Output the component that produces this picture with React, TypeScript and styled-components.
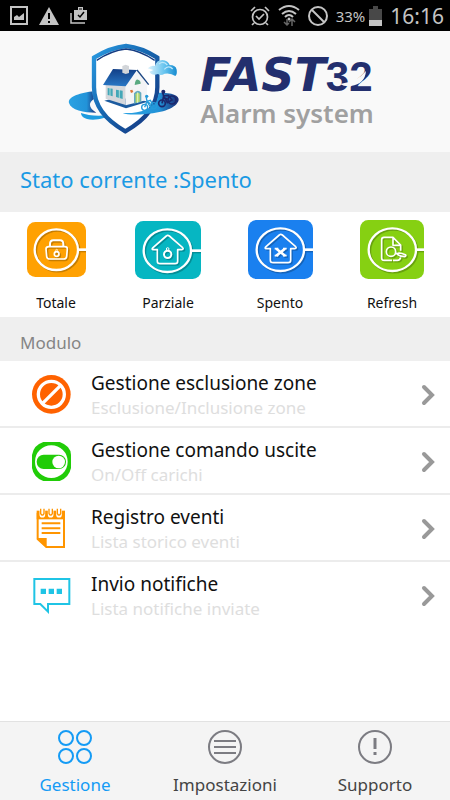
import React from "react";
import styled, { createGlobalStyle } from "styled-components";

const GlobalStyle = createGlobalStyle`
  * { box-sizing: border-box; }
  body { margin: 0; background: #fff; }
  button { font: inherit; color: inherit; background: none; border: 0; padding: 0; cursor: pointer; }
  svg { display: block; flex: none; }
`;

const Page = styled.div`
  min-height: 100vh;
  display: flex;
  flex-direction: column;
  background: #fff;
  color: #111;
  font-family: "Noto Sans", "Open Sans", sans-serif;
`;

const StatusBar = styled.div`
  height: 31px;
  padding: 0 6px 0 10px;
  display: flex;
  align-items: center;
  justify-content: space-between;
  background: #000;
  color: #c4c4c4;
`;

const StatusGroup = styled.div<{ $gap: number }>`
  display: flex;
  align-items: center;
  gap: ${(p) => p.$gap}px;
`;

const BatteryGroup = styled.div`
  display: flex;
  align-items: center;
  gap: 4px;
`;

const Percent = styled.span`
  font-size: 15px;
  line-height: 20px;
`;

const Clock = styled.span`
  font-size: 21px;
  line-height: 28px;
`;

const Header = styled.header`
  height: 121px;
  padding: 11px 8px 0 0;
  display: flex;
  justify-content: center;
  gap: 20px;
  background: #f9f9f9;
`;

const Brand = styled.div`
  padding-top: 9px;
`;

const Wordmark = styled.div`
  display: flex;
  align-items: baseline;
  height: 48px;
  line-height: 48px;
  color: #232f6e;
  font-weight: 700;
`;

const WordmarkName = styled.span`
  font-family: "DejaVu Sans", sans-serif;
  font-style: italic;
  font-size: 46px;
`;

const WordmarkNumber = styled.span`
  position: relative;
  font-family: "Liberation Sans", sans-serif;
  font-size: 42px;
`;

const Swoosh = styled.svg`
  position: absolute;
  left: 14px;
  top: 16px;
`;

const Tagline = styled.div`
  font-size: 26px;
  line-height: 28px;
  font-weight: 600;
  color: #a0a0a0;
`;

const Current = styled.div`
  height: 60px;
  padding: 0 20px 6px;
  display: flex;
  align-items: center;
  background: #efefef;
  color: #1b9ae4;
  font-size: 22px;
`;

const Modes = styled.div`
  height: 105px;
  padding-right: 2px;
  display: grid;
  grid-template-columns: repeat(4, 1fr);
`;

const ModeButton = styled.button`
  display: flex;
  flex-direction: column;
  align-items: center;
  font-size: 14px;
  line-height: 20px;
`;

const ModeIcon = styled.span`
  height: 81px;
  padding-bottom: 6px;
  display: flex;
  align-items: center;
`;

const SectionTitle = styled.h2`
  margin: 0;
  height: 44px;
  padding: 8px 20px 0;
  background: #efefef;
  color: #858585;
  font-size: 17px;
  line-height: 36px;
  font-weight: 400;
`;

const List = styled.ul`
  margin: 0;
  padding: 0;
  list-style: none;
`;

const Item = styled.li`
  & + & { border-top: 2px solid #ececec; }
`;

const RowButton = styled.button`
  width: 100%;
  height: 65px;
  padding: 2px 15px 0 32px;
  display: flex;
  align-items: center;
  text-align: left;
`;

const RowText = styled.span`
  flex: 1;
  padding-left: 20px;
  display: flex;
  flex-direction: column;
`;

const RowTitle = styled.span`
  font-size: 19px;
  line-height: 26px;
`;

const RowDetail = styled.span`
  font-size: 17px;
  line-height: 24px;
  color: #dedede;
`;

const TabBar = styled.nav`
  height: 79px;
  margin-top: auto;
  display: grid;
  grid-template-columns: repeat(3, 1fr);
  background: #f4f4f4;
  border-top: 1px solid #e2e2e2;
`;

const Tab = styled.button<{ $active?: boolean }>`
  && { color: ${(p) => (p.$active ? "#149bf5" : "#444")}; }
  padding-top: 7px;
  display: flex;
  flex-direction: column;
  align-items: center;
  gap: 8px;
  font-size: 17px;
  line-height: 24px;
`;

const Logo = () => (
  <svg width="112" height="93" viewBox="31 22 336 279" role="img" aria-label="Fast 32">
    <defs>
      <linearGradient id="shield" x1="0" y1="0" x2="1" y2="1">
        <stop offset="0" stopColor="#2a9be2" />
        <stop offset=".45" stopColor="#1767b0" />
        <stop offset="1" stopColor="#16327c" />
      </linearGradient>
      <linearGradient id="ring" x1="0" x2="1">
        <stop offset="0" stopColor="#2aa2e3" />
        <stop offset=".65" stopColor="#2293d8" />
        <stop offset="1" stopColor="#1b2b75" />
      </linearGradient>
      <linearGradient id="roof" x1="0" y1="0" x2="0" y2="1">
        <stop offset="0" stopColor="#123f87" />
        <stop offset="1" stopColor="#2877c5" />
      </linearGradient>
      <linearGradient id="cloud" x1="0" x2="1">
        <stop offset="0" stopColor="#dff3fc" />
        <stop offset=".6" stopColor="#62c2ee" />
        <stop offset="1" stopColor="#168bd0" />
      </linearGradient>
    </defs>
    <path d="M110 170C65 174 29 188 34 205C40 226 78 234 116 234C96 222 88 206 110 192Z" fill="url(#ring)" />
    <path d="M70 235C91 243 130 246 164 239C148 251 110 259 88 253C78 250 70 244 70 235Z" fill="#1d9ce0" />
    <path d="M104 67Q155 36 205 32Q254 36 304 67V158C304 222 257 263 203 291C149 263 104 222 104 158Z" fill="#fff" />
    <path d="M109 69Q158 39 205 34Q252 39 299 69V158C299 218 255 261 203 290C151 261 109 218 109 158Z" fill="none" stroke="url(#shield)" strokeWidth="13" />
    <path d="M117 77Q160 48 205 43Q248 48 291 77" fill="none" stroke="#143c82" strokeWidth="4" />
    <path d="M195 235C245 238 282 222 296 202L304 174C344 174 365 182 363 196C358 220 312 235 270 237C236 241 210 241 195 235Z" fill="url(#ring)" />
    <path d="M140 198L205 221L270 201L245 194L170 190Z" fill="#1c5b9f" />
    <path d="M144 146L204 150L204 211L144 192Z" fill="#d5d8dc" />
    <path d="M204 151L239 109L269 148L267 196L204 212Z" fill="#f3f4f6" />
    <path d="M166 103L238 106L204 155L136 151Z" fill="url(#roof)" />
    <path d="M238 106L273 150" stroke="#1c4783" strokeWidth="4" />
    <path d="M194 94L204 90L214 94V115L204 118L194 114Z" fill="#d2d5d9" />
    <path d="M150 160L165 162V185L150 181ZM175 165L195 168V193L175 187Z" fill="#43a7b8" />
    <path d="M157 160V184M185 165V190" stroke="#dff7ec" strokeWidth="2" />
    <path d="M229 207V176Q239 162 251 174V202Z" fill="#66aabd" />
    <path d="M234 204V179Q239 170 246 177V201Z" fill="#b8d96b" />
    <path d="M240 173V205" stroke="#f8fff8" strokeWidth="2" />
    <path d="M231 151Q233 133 241 135Q249 137 249 147Z" fill="#58a980" />
    <path d="M217 167L224 165L227 172L220 175Z" fill="#df773b" />
    <g fill="none" stroke="#249bda" strokeWidth="4">
      <circle cx="261" cy="218" r="9" /><circle cx="288" cy="213" r="9" />
      <path d="M261 218L268 200L277 215L288 213L278 197L268 200M266 188L268 201L278 207" />
    </g>
    <circle cx="267" cy="185" r="5" fill="#249bda" />
    <g fill="none" stroke="#1b286d" strokeWidth="5">
      <circle cx="313" cy="206" r="10" /><circle cx="343" cy="196" r="12" />
      <path d="M313 206L318 184L329 204L343 196L332 182L316 184M315 173L319 189L330 194" />
    </g>
    <circle cx="317" cy="171" r="6" fill="#1b286d" />
    <path d="M270 101Q281 90 292 94Q296 76 314 76Q331 77 336 91Q354 91 357 105Q359 119 353 124Q339 114 321 117Q309 124 301 118Q282 124 275 111L287 106Z" fill="url(#cloud)" />
    <path d="M304 88Q317 77 329 91M320 104Q333 90 345 103" fill="none" stroke="#bde7fa" strokeWidth="4" />
  </svg>
);

const House = () => <path d="M44 75L31 75Q26 74 31 69L71 34Q75 30 80 34L120 69Q124 74 117 75H105V110Q105 117 97 117H52Q44 117 44 110Z" />;

type ModeKind = "total" | "partial" | "off" | "refresh";
const modeLook: Record<ModeKind, { w: number; h: number; color: string }> = {
  total: { w: 59, h: 55, color: "#ffa102" },
  partial: { w: 66, h: 58, color: "#06b6c2" },
  off: { w: 65, h: 59, color: "#1a80ef" },
  refresh: { w: 64, h: 59, color: "#86d012" },
};

const ModeGlyph = ({ kind }: { kind: ModeKind }) => {
  const { w, h, color } = modeLook[kind];
  const W = w * 3;
  const H = h * 3;
  const small = kind === "total";
  const cx = small ? 88 : 97;
  const cy = small ? 83 : 89;
  const rx = small ? 65 : 71;
  const ry = small ? 61 : 64;
  const frame = (
    <>
      <ellipse cx={cx} cy={cy} rx={rx} ry={ry} strokeWidth="7" />
      <path d={`M${cx + rx} ${cy}H${W}`} strokeWidth="8" />
    </>
  );
  const symbol = (
    <>
      {kind === "total" && (
        <g strokeWidth="5">
          <path d="M69 73V66Q69 55 79 55H99Q109 55 109 66V73" strokeWidth="6" />
          <path d="M65 74H114Q121 74 121 81L119 103Q118 111 110 111H68Q60 111 59 103L57 81Q57 74 65 74Z" />
          <circle cx="89" cy="96" r="7" /><circle cx="89" cy="85" r="3" strokeWidth="2" />
        </g>
      )}
      {kind === "partial" && (
        <g strokeWidth="5" transform="translate(23 11)">
          <House /><circle cx="75" cy="89" r="11" strokeWidth="6" /><circle cx="75" cy="73" r="4" strokeWidth="3" />
        </g>
      )}
      {kind === "off" && (
        <g strokeWidth="5" transform="translate(23 11)">
          <House /><path d="M62 75L88 96M88 75L62 96" strokeWidth="8" /><path d="M57 75H68M82 75H93M57 96H68M82 96H93" strokeWidth="5" />
        </g>
      )}
      {kind === "refresh" && (
        <g strokeWidth="5" transform="translate(0 1)">
          <path d="M96 120H72Q65 120 65 113V58Q65 51 72 51H99L122 74V91M99 52V75H121M122 111Q120 120 112 120H99" />
          <circle cx="93" cy="94" r="14" />
          <path d="M106 100L112 99M114 99Q121 97 136 103Q140 106 134 109Q121 109 113 103Z" />
        </g>
      )}
    </>
  );
  return (
    <svg width={w} height={h} viewBox={`0 0 ${W} ${H}`} fill="none" strokeLinejoin="round" aria-hidden="true">
      <rect width={W} height={H} rx="25" fill={color} />
      <g stroke="#000" opacity=".22" transform="translate(4 4)">{frame}{symbol}</g>
      <g stroke="#fff">{frame}{symbol}</g>
    </svg>
  );
};

const ZoneIcon = () => (
  <svg width="39" height="39" viewBox="0 0 117 117" aria-hidden="true">
    <circle cx="58" cy="58" r="58" fill="#ff6200" />
    <circle cx="58" cy="58" r="39" fill="none" stroke="#fff" strokeWidth="10" />
    <path d="M31 86L86 31" stroke="#fff" strokeWidth="10" />
  </svg>
);

const OutputIcon = () => (
  <svg width="39" height="39" viewBox="0 0 117 117" aria-hidden="true">
    <path d="M34 0H83Q117 12 117 39V78Q111 107 83 117H34Q5 107 0 78V39Q5 9 34 0Z" fill="#21cc08" />
    <circle cx="58" cy="59" r="49" fill="#fff" />
    <rect x="14" y="38" width="88" height="43" rx="21" fill="#21cc08" />
    <circle cx="80" cy="60" r="19" fill="#fff" />
  </svg>
);

const EventsIcon = () => (
  <svg width="39" height="41" viewBox="0 0 117 123" fill="none" stroke="#ff9500" aria-hidden="true">
    <path d="M17 14V93L43 117H96V14" strokeWidth="6" />
    <path d="M14 90H44V120Z" fill="#ff9500" stroke="none" />
    <path d="M14 8H99V34H14Z" fill="#ff9500" stroke="none" />
    <path d="M31 0V20M56 0V20M81 0V20" stroke="#fff" strokeWidth="17" strokeLinecap="round" />
    <path d="M26 2V17Q31 26 36 17V2M51 2V17Q56 26 61 17V2M76 2V17Q81 26 86 17V2" strokeWidth="4" />
    <path d="M29 46H85M29 61H85M29 75H85" strokeWidth="6" />
  </svg>
);

const NotifyIcon = () => (
  <svg width="39" height="38" viewBox="0 0 117 114" fill="none" stroke="#1fc4e5" strokeWidth="6" aria-hidden="true">
    <path d="M7 6H112V81H48V104L25 81H7Z" />
    <path d="M26 43H42M50 43H66M74 43H90" strokeWidth="16" />
  </svg>
);

const Chevron = () => (
  <svg width="15" height="22" viewBox="0 0 15 22" fill="none" stroke="#999" strokeWidth="4" strokeLinecap="round" aria-hidden="true">
    <path d="M4 3L12 11L4 19" />
  </svg>
);

const TabGlyph = ({ kind }: { kind: "grid" | "lines" | "help" }) => (
  <svg width="36" height="36" viewBox="0 0 36 36" fill="none" stroke={kind === "grid" ? "#149bf5" : "#7c7c82"} strokeWidth="2" aria-hidden="true">
    {kind === "grid" ? (
      <><circle cx="9" cy="9" r="7" /><circle cx="27" cy="9" r="7" /><circle cx="9" cy="27" r="7" /><circle cx="27" cy="27" r="7" /></>
    ) : (
      <circle cx="18" cy="18" r="16" />
    )}
    {kind === "lines" && <path d="M7 12H29M7 18H29M7 24H29" />}
    {kind === "help" && <path d="M18 9V20M18 23V26" strokeWidth="3" />}
  </svg>
);

const DeviceStatus = () => (
  <StatusBar>
    <StatusGroup $gap={11}>
      <svg width="18" height="19" viewBox="0 0 18 19" aria-hidden="true">
        <path d="M1 1H17V18H1Z" fill="none" stroke="#c4c4c4" strokeWidth="2" />
        <path d="M4 14V11L7 9L9 11L14 7V14Z" fill="#c4c4c4" />
      </svg>
      <svg width="20" height="18" viewBox="0 0 20 18" aria-hidden="true">
        <path d="M10 0L20 18H0Z" fill="#c4c4c4" />
        <path d="M10 6V12M10 14V16" stroke="#000" strokeWidth="2" />
      </svg>
      <svg width="18" height="17" viewBox="0 0 18 17" aria-hidden="true">
        <path d="M1 6V16H15" fill="none" stroke="#c4c4c4" strokeWidth="1.5" />
        <path d="M4 3H8V0H13V3H17V13H4Z" fill="#c4c4c4" />
        <path d="M9 2H12" stroke="#000" /><path d="M8 8L10 10L14 5" fill="none" stroke="#000" strokeWidth="1.5" />
      </svg>
    </StatusGroup>
    <StatusGroup $gap={8}>
      <svg width="20" height="20" viewBox="0 0 20 20" fill="none" stroke="#c4c4c4" strokeWidth="1.7" aria-hidden="true">
        <circle cx="10" cy="11" r="7.5" /><path d="M1 5L5 1M15 1L19 5M4 17L2 19M16 17L18 19M6 10L9 13L14 8" />
      </svg>
      <svg width="22" height="23" viewBox="0 0 22 23" fill="none" aria-hidden="true">
        <path d="M1 6Q11-2 21 6M4 10Q11 4 18 10M7 13Q11 9 15 13" stroke="#c4c4c4" strokeWidth="2" />
        <circle cx="11" cy="15" r="1.5" fill="#c4c4c4" />
        <path d="M9 15V21M6 18L9 21L11 19M14 22V16M11 18L14 15L17 18" stroke="#666" strokeWidth="1.5" />
      </svg>
      <svg width="20" height="20" viewBox="0 0 20 20" fill="none" stroke="#c4c4c4" strokeWidth="2" aria-hidden="true">
        <circle cx="10" cy="10" r="9" /><path d="M4 4L16 16" />
      </svg>
      <BatteryGroup>
        <Percent>33%</Percent>
        <svg width="13" height="20" viewBox="0 0 13 20" aria-hidden="true">
          <path d="M4 0H9V3H13V14H0V3H4Z" fill="#484848" /><path d="M0 14H13V20H0Z" fill="#c4c4c4" />
        </svg>
      </BatteryGroup>
      <Clock>16:16</Clock>
    </StatusGroup>
  </StatusBar>
);

const modes: { kind: ModeKind; label: string }[] = [
  { kind: "total", label: "Totale" },
  { kind: "partial", label: "Parziale" },
  { kind: "off", label: "Spento" },
  { kind: "refresh", label: "Refresh" },
];

const rows = [
  { Icon: ZoneIcon, title: "Gestione esclusione zone", detail: "Esclusione/Inclusione zone" },
  { Icon: OutputIcon, title: "Gestione comando uscite", detail: "On/Off carichi" },
  { Icon: EventsIcon, title: "Registro eventi", detail: "Lista storico eventi" },
  { Icon: NotifyIcon, title: "Invio notifiche", detail: "Lista notifiche inviate" },
];

export default function App() {
  return (
    <Page>
      <GlobalStyle />
      <DeviceStatus />
      <Header>
        <Logo />
        <Brand>
          <Wordmark>
            <WordmarkName>FAST</WordmarkName>
            <WordmarkNumber>
              32
              <Swoosh width="28" height="18" viewBox="0 0 28 18" aria-hidden="true">
                <path d="M0 15Q17 13 26 2Q25 15 11 17Q5 18 0 15Z" fill="#f9f9f9" />
              </Swoosh>
            </WordmarkNumber>
          </Wordmark>
          <Tagline>Alarm system</Tagline>
        </Brand>
      </Header>
      <Current>Stato corrente :Spento</Current>
      <Modes>
        {modes.map(({ kind, label }) => (
          <ModeButton key={kind} type="button">
            <ModeIcon><ModeGlyph kind={kind} /></ModeIcon>
            {label}
          </ModeButton>
        ))}
      </Modes>
      <SectionTitle>Modulo</SectionTitle>
      <List>
        {rows.map(({ Icon, title, detail }) => (
          <Item key={title}>
            <RowButton type="button">
              <Icon />
              <RowText>
                <RowTitle>{title}</RowTitle>
                <RowDetail>{detail}</RowDetail>
              </RowText>
              <Chevron />
            </RowButton>
          </Item>
        ))}
      </List>
      <TabBar>
        <Tab type="button" $active aria-current="page"><TabGlyph kind="grid" />Gestione</Tab>
        <Tab type="button"><TabGlyph kind="lines" />Impostazioni</Tab>
        <Tab type="button"><TabGlyph kind="help" />Supporto</Tab>
      </TabBar>
    </Page>
  );
}
